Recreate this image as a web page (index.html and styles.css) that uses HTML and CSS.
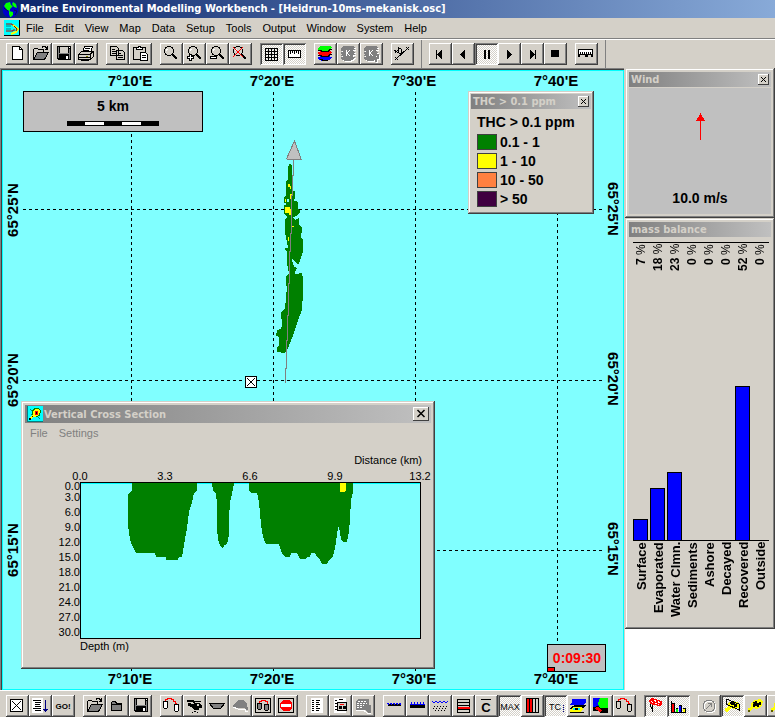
FILE: index.html
```html
<!DOCTYPE html>
<html lang="en">
<head>
<meta charset="utf-8">
<title>Marine Environmental Modelling Workbench</title>
<link rel="stylesheet" href="styles.css">
</head>
<body>
<svg class="defs" aria-hidden="true">
  <defs>
    <symbol id="open" viewBox="0 0 23 22">
      <path d="M4.500 15.500v-9l1-1h3l1 1h5v3" fill="#d4d0c8" stroke="#000"/>
      <path d="M4.500 16.500l4-7h11l-4 7z" fill="#808080" stroke="#000"/>
      <path d="M12.500 4.500h1v-1h3v1h1v1h1M18.500 3v4M16 6.500h3" fill="none" stroke="#000"/>
    </symbol>
    <symbol id="save" viewBox="0 0 23 22">
      <path d="M5 3h14v14H6l-1-1z"/>
      <path d="M6 4h1v11H6zM17 6h1v10h-1zM7 10h10v1H7z" fill="#808080"/>
      <path d="M8 4h8v6H8z" fill="#d4d0c8"/><path d="M17 4h1v1h-1zM14 13h2v3h-2z" fill="#fff"/>
    </symbol>
    <symbol id="lens" viewBox="0 0 23 22">
      <circle cx="9" cy="8" r="4.500" fill="#d4d0c8" stroke="#000"/>
      <path d="M6.500 8V6.500H8" fill="none" stroke="#fff"/>
      <path d="M12 11l5 5" stroke="#000" stroke-width="2"/>
    </symbol>
    <symbol id="booms" viewBox="0 0 23 22">
      <path d="M3.500 6.500h4v6l-1 1h-2l-1-1zM14.500 9.500h4v6l-1 1h-2l-1-1z" stroke="#000"/>
      <path d="M5.500 6V4.500h2v-1h4v1h2v2h2v2h1V9" fill="none" stroke="#f00"/>
    </symbol>
    <symbol id="stack" viewBox="0 0 23 22">
      <path d="M3 15l4-2h7l4 1-3 3-4 1H8z" class="s3"/><path d="M3 10l4-2h8l3 1-4 4H7z" class="s2"/><path d="M3 6l4-3h8l3 1-4 4H7z" class="s1"/>
      <path d="M4 7.500h3l1 1h6l2-2h2M4 12.500h3l1 1h6l2-2h2M6 16.500h2l1 1h5" fill="none" class="s4"/>
    </symbol>
    <symbol id="spill" viewBox="0 0 23 22">
      <path d="M4 16v-3l3-1V8l4-3 6-1 2 3-2 5-4 2-4-1-3 4z" fill="#ff0"/>
      <path d="M9 7h2V6h2v2h2V7h2v3h-2v2h-2v-1h-2v1H9z"/><path d="M4 15h2v2H4zM9 8h1v1H9z" fill="#606000"/>
    </symbol>
    <symbol id="close" viewBox="0 0 11 11"><path d="M3 3l5 5M8 3l-5 5" stroke="#000" stroke-width="1"/></symbol>
  </defs>
</svg>

<header class="titlebar">
  <svg class="globe" viewBox="0 0 17 17" aria-hidden="true"><circle cx="8.500" cy="8.500" r="8" fill="#00c"/><path d="M4 2l4-1 1 3 2 1-3 3v2l-3-1-3-4zM11 1l3 2 1 4-3-1-2-3zM7 10l4 1v3l-2 2H8l-1-3z" fill="#0f0"/><path d="M2 7l4 3M12 9l3 1-2 4" stroke="#0a0a50" fill="none"/></svg>
  <h1>Marine Environmental Modelling Workbench - [Heidrun-10ms-mekanisk.osc]</h1>
</header>

<nav class="menubar" aria-label="Main menu">
  <svg class="docicon" viewBox="0 0 16 16" aria-hidden="true"><path d="M0 0h16v16H0z" fill="#0ff"/><path d="M2 4h6v1h2M2 11h7v-1h2" stroke="#b00000" fill="none"/><path d="M2 6h5M2 9h5" stroke="#008080"/><path d="M9 5l5 4-2 3-5 2" stroke="#ff0" stroke-width="2" fill="none"/><path d="M10 6l3 3-1 2" stroke="#800000" fill="none"/><path d="M0 15.500h15.500V0" stroke="#000" fill="none"/></svg>
  <button>File</button><button>Edit</button><button>View</button><button>Map</button><button>Data</button><button>Setup</button><button>Tools</button><button>Output</button><button>Window</button><button>System</button><button>Help</button>
</nav>

<div class="toolbar top" role="toolbar" aria-label="Standard">
  <div class="group">
    <button class="tool" aria-label="New"><svg viewBox="0 0 23 22"><path d="M6.500 3.500h7l3 3v10h-10z" fill="#fff" stroke="#000"/><path d="M13.500 3.500v3h3" fill="none" stroke="#000"/></svg></button>
    <button class="tool" aria-label="Open"><svg><use href="#open"/></svg></button>
    <button class="tool" aria-label="Save"><svg><use href="#save"/></svg></button>
    <button class="tool" aria-label="Print"><svg viewBox="0 0 23 22"><path d="M7.500 9.500l2-6h8l-2 6z" fill="#fff" stroke="#000"/><path d="M10 5.500h5M9 7.500h5" stroke="#000"/><path d="M3.500 11.500l3-3h12v5l-3 3h-12z" fill="#d4d0c8" stroke="#000"/><path d="M3 11.500h12l3-3M15.500 11v5M4 14.500h11M6 17.500h8" fill="none" stroke="#000"/><path d="M11 13h2" stroke="#808000"/></svg></button>
  </div>
  <div class="group">
    <button class="tool" aria-label="Copy"><svg viewBox="0 0 23 22"><path d="M4.500 3.500h6l2 2v7h-8zM10.500 7.500h6l2 2v7h-8z" fill="#d4d0c8" stroke="#000"/><path d="M6 6.500h3M6 8.500h4M6 10.500h4M12 10.500h3M12 12.500h5M12 14.500h5" stroke="#000"/></svg></button>
    <button class="tool" aria-label="Paste"><svg viewBox="0 0 23 22"><path d="M4.500 4.500h12v12h-12z" fill="#d4d0c8" stroke="#000"/><path d="M7.500 6.500v-2h2v-1h2v1h2v2z" fill="#fff" stroke="#000"/><path d="M11.500 9.500h5l2 2v6h-7z" fill="#fff" stroke="#000"/><path d="M13 12.500h4M13 14.500h4" stroke="#000"/></svg></button>
  </div>
  <div class="group">
    <button class="tool" aria-label="Zoom"><svg><use href="#lens"/></svg></button>
    <button class="tool" aria-label="Zoom in"><svg viewBox="0 0 23 22"><use href="#lens" x="1"/><path d="M6.500 11.500h2v2h2v2h-2v2h-2v-2h-2v-2h2z" fill="#fff" stroke="#000"/></svg></button>
    <button class="tool" aria-label="Zoom out"><svg viewBox="0 0 23 22"><use href="#lens" x="1"/><path d="M4.500 13.500h6v2h-6z" fill="#fff" stroke="#000"/></svg></button>
    <button class="tool" aria-label="Reset zoom"><svg viewBox="0 0 23 22"><use href="#lens"/><path d="M4 4l10 10M14 4L4 14" stroke="#f00"/></svg></button>
  </div>
  <div class="group">
    <button class="tool pressed" aria-label="Grid"><svg viewBox="0 0 23 22"><path d="M5.500 5v13M8.500 5v13M11.500 5v13M14.500 5v13M17.500 5v13M5 5.500h13M5 8.500h13M5 11.500h13M5 14.500h13M5 17.500h13" stroke="#000"/></svg></button>
    <button class="tool pressed" aria-label="Scale"><svg viewBox="0 0 23 22"><path d="M5.500 7.500h12v7h-12z" fill="#fff" stroke="#000"/><path d="M7.500 8v3M9.500 8v2M11.500 8v3M13.500 8v2M15.500 8v3" stroke="#000"/></svg></button>
  </div>
  <div class="group">
    <button class="tool layers" aria-label="Layers"><svg><use href="#stack"/></svg></button>
    <button class="tool layers off" aria-label="Layer K" disabled><svg viewBox="0 0 23 22"><use href="#stack"/><path d="M9.500 7v6M13 7l-3 3 3 3" stroke="#fff" fill="none"/></svg></button>
    <button class="tool layers off" aria-label="Layer query" disabled><svg viewBox="0 0 23 22"><use href="#stack"/><path d="M9.500 7v6M13 7l-3 3 3 3" stroke="#fff" fill="none"/><path d="M14 13v-1h4v3h-2v4" stroke="#808080" stroke-width="2" fill="none"/></svg></button>
  </div>
  <div class="group">
    <button class="tool" aria-label="Section"><svg viewBox="0 0 23 22"><path d="M5 16l12-11M3.500 7.500l7 4M7.500 4v6M7.500 4.500l3 2v4" stroke="#000" fill="none"/><path d="M4 14l3 3M7 14l-3 3M15 4l3 3M18 4l-3 3M4 10l5-5" stroke="#000"/></svg></button>
  </div>
  <div class="rule"></div>
  <div class="group">
    <button class="tool" aria-label="First"><svg viewBox="0 0 23 22"><path d="M7 7h1v9H7zM8 11.500l5-4.500v9z"/></svg></button>
    <button class="tool" aria-label="Step back"><svg viewBox="0 0 23 22"><path d="M8 11.500l5-4.500v9z"/></svg></button>
    <button class="tool pressed" aria-label="Pause"><svg viewBox="0 0 23 22"><path d="M9 7h2v9H9zM13 7h2v9h-2z"/></svg></button>
    <button class="tool" aria-label="Play"><svg viewBox="0 0 23 22"><path d="M9 7l5 4.500-5 4.500z"/></svg></button>
    <button class="tool" aria-label="Last"><svg viewBox="0 0 23 22"><path d="M9 7l5 4.500-5 4.500zM14 7h1v9h-1z"/></svg></button>
    <button class="tool" aria-label="Stop"><svg viewBox="0 0 23 22"><path d="M7 7h8v7H7z"/></svg></button>
  </div>
  <div class="group">
    <button class="tool" aria-label="Timeline"><svg viewBox="0 0 23 22"><path d="M3.500 6.500h14v5h-14z" fill="#fff" stroke="#000"/><path d="M5.500 9v2M7.500 9v2M9.500 9v2M11.500 9v2M13.500 9v2M15.500 9v2" stroke="#000"/><path d="M3 11h2v3H3zM16 11h2v3h-2zM10 11h1v-1h1v1h1v3h-3z"/></svg></button>
  </div>
  <div class="rule"></div>
</div>

<main class="workspace">
  <section class="map" aria-label="Map">
    <svg class="chart" width="100%" height="100%">
      <g transform="translate(-3 -71)">
        <g class="grid">
          <path d="M131.500 92V672M273.500 92V672M415.500 92V672M557.500 92V672M23 209.500H604M23 380.500H604M23 550.500H604"/>
        </g>
        <g class="coord">
          <text x="130" y="86">7°10'E</text><text x="272" y="86">7°20'E</text><text x="414" y="86">7°30'E</text><text x="556" y="86">7°40'E</text>
          <text x="130" y="684">7°10'E</text><text x="272" y="684">7°20'E</text><text x="414" y="684">7°30'E</text><text x="556" y="684">7°40'E</text>
          <text transform="translate(18 210) rotate(-90)">65°25'N</text><text transform="translate(18 380) rotate(-90)">65°20'N</text><text transform="translate(18 550) rotate(-90)">65°15'N</text>
          <text transform="translate(608 209) rotate(90)">65°25'N</text><text transform="translate(608 379) rotate(90)">65°20'N</text><text transform="translate(608 549) rotate(90)">65°15'N</text>
        </g>
        <g class="crisp">
          <path d="M23.500 91.500h179v40h-179z" fill="#c0c0c0" stroke="#000"/>
          <path d="M67 121h92v5H67z"/><path d="M85 122h19v3H85zM122 122h19v3h-19z" fill="#fff"/>
          <path fill="#008000" d="M290 163L292 166V180L293 191H295V198L294 201H297L298 203V209L300 210V213L297 215V216L293 217L295 220L299 218L299 224L302 228L301 238L303 240V252L301 257L299 264H297L292 258V261L293 263L294 267L297 268L295 272V274L302 273L303 278V293L302 310L298 320L295 330L292 338L288 348L285 353L277 352V348L279 345V337L276 336L277 330L281 329L282 325L281 312L285 309L286 298L287 287L286 285V277L289 273L287 263V252L285 249V248H288L286 237L285 233V220L287 217L284 213V197L286 195V182L288 179V167Z"/>
          <path fill="#ff0" d="M288 184h2v2h1v3h-1v-2h-2zM290 194h2v5h-2zM285 199h1v3h-1zM285 207h5v2h2v6h-3v-2h-4zM288 237h1v4h-1zM292 226h2v1h-2z"/>
          <path fill="#80ffff" d="M287 199h2v3h-2zM284 203h2v2h-2z"/>
          <path d="M293.500 160v15h-1v20h-1v38h-1v18h-1v32h-1v32h-1v25h-1v28h-1v15" fill="none" stroke="#808080"/>
          <path d="M294.500 141l7 19-15-1z" fill="#c0c0c0" stroke="#808080"/>
          <path d="M245.500 376.500h11v11h-11z" fill="#fff" stroke="#000"/><path d="M247 378l8 8M255 378l-8 8" stroke="#000"/>
          <path d="M547.500 644.500h58v27h-58z" fill="#c0c0c0" stroke="#000"/>
          <path d="M547.500 667.500h7v4h-7z" fill="#f00" stroke="#000"/>
        </g>
        <text class="big" x="113" y="111">5 km</text>
        <text class="big clock" x="577" y="663">0:09:30</text>
      </g>
    </svg>

    <section class="window legend" aria-label="Legend">
      <header class="caption"><h2>THC &gt; 0.1 ppm</h2><button class="x" aria-label="Close"><svg><use href="#close"/></svg></button></header>
      <div class="legend-body">
        <p>THC &gt; 0.1 ppm</p>
        <ul>
          <li><i class="green"></i>0.1 - 1</li>
          <li><i class="yellow"></i>1 - 10</li>
          <li><i class="orange"></i>10 - 50</li>
          <li><i class="purple"></i>&gt; 50</li>
        </ul>
      </div>
    </section>

    <section class="window cross" aria-label="Vertical Cross Section">
      <header class="caption tall">
        <svg class="wicon" viewBox="0 0 16 16"><path d="M0 0h16v16H0z" fill="#0ff"/><path d="M3 3l10 10M4 8h9" stroke="#008080" fill="none"/><path d="M5 9V5l3-3h4l2 3-1 4-3 2H7l-4 3-1-2z" fill="#ff0"/><path d="M5.500 9V5l3-3h3l2 3-1 4-3 2" stroke="#008000" fill="none"/><path d="M8 5h3v4H8z" fill="#f00"/><path d="M2 12h2v2H2zM5 10h1v1H5zM9 6h1v2H9z"/><path d="M.5 0v15.500H16" stroke="#008080" fill="none"/></svg>
        <h2>Vertical Cross Section</h2>
        <button class="x big-x" aria-label="Close"><svg viewBox="0 0 16 14"><path d="M4.500 3l7 7M11.500 3l-7 7" stroke="#000" stroke-width="1.500"/></svg></button>
      </header>
      <nav class="submenu"><button disabled>File</button><button disabled>Settings</button></nav>
      <svg class="profile" viewBox="25 443 406 222">
        <text x="422" y="464" class="end">Distance (km)</text>
        <g class="mid"><text x="80" y="480">0.0</text><text x="165" y="480">3.3</text><text x="250" y="480">6.6</text><text x="335" y="480">9.9</text><text x="420" y="480">13.2</text></g>
        <g class="end"><text x="80" y="490">0.0</text><text x="80" y="501">3.0</text><text x="80" y="516">6.0</text><text x="80" y="531">9.0</text><text x="80" y="546">12.0</text><text x="80" y="561">15.0</text><text x="80" y="576">18.0</text><text x="80" y="591">21.0</text><text x="80" y="606">24.0</text><text x="80" y="621">27.0</text><text x="80" y="636">30.0</text></g>
        <g class="crisp">
          <path d="M80.500 482.500h340v156h-340z" fill="#80ffff" stroke="#000"/>
          <path d="M81 483h339v1H81z" fill="#0ff"/>
          <path fill="#008000" d="M132 483v8l-4 3v31l2 15 3 7 3 6h19l1 4h10v3h12l1-3h3l2-12 3-17 2-16 3-10 2-9 3-3v-7zM212 483l1 7 3 4 1 10v24l1 12 3 7 2 2 1-4 3-1 2-9v-17l1-16 2-8 2-11zM249 483v8l2 2h6l2 9 2 23 2 12 3 7h13l3 9 3 4h5l1-4h6l3 6h6l1-2h3l1-4h4l2 4 3 3 2 4h5l2-4 4-4 2-8 2-13 1-8h1l1 5 1 8 2 2h4l2-10 1-14 1-18 2-8v-9z"/>
          <path d="M340 483h6v8l-2 1h-4z" fill="#ff0"/>
        </g>
        <text x="80" y="650">Depth (m)</text>
      </svg>
    </section>
  </section>

  <aside class="side">
    <section class="window wind" aria-label="Wind">
      <header class="caption"><h2>Wind</h2><button class="x" aria-label="Close"><svg><use href="#close"/></svg></button></header>
      <div class="wind-body">
        <svg viewBox="0 0 11 27"><path d="M5 7h1v20H5z" fill="#f00"/><path d="M5.500 0L10 8H1z" fill="#f00"/></svg>
        <strong>10.0 m/s</strong>
      </div>
    </section>
    <section class="window mass" aria-label="mass balance">
      <header class="caption"><h2>mass balance</h2></header>
      <ul class="bars">
        <li><b>7 <span>%</span></b><div><i style="--v:7"></i></div><em>Surface</em></li>
        <li><b>18 <span>%</span></b><div><i style="--v:17.300"></i></div><em>Evaporated</em></li>
        <li><b>23 <span>%</span></b><div><i style="--v:22.700"></i></div><em>Water Clmn.</em></li>
        <li><b>0 <span>%</span></b><div></div><em>Sediments</em></li>
        <li><b>0 <span>%</span></b><div></div><em>Ashore</em></li>
        <li><b>0 <span>%</span></b><div></div><em>Decayed</em></li>
        <li><b>52 <span>%</span></b><div><i style="--v:51.300"></i></div><em>Recovered</em></li>
        <li><b>0 <span>%</span></b><div></div><em>Outside</em></li>
      </ul>
    </section>
  </aside>
</main>

<div class="toolbar bottom" role="toolbar" aria-label="Tools">
  <div class="group">
    <button class="tool" aria-label="Site"><svg viewBox="0 0 23 22"><path d="M4.500 4.500h12v12h-12z" fill="#fff" stroke="#000"/><path d="M6 6l9 9M15 6l-9 9" stroke="#000"/></svg></button>
    <button class="tool" aria-label="Sort"><svg viewBox="0 0 23 22"><path d="M3 3h11v15H3z" fill="#fff"/><path d="M4 5.500h8M6 7.500h6M6 9.500h5M6 11.500h6M4 13.500h8M6 15.500h6" stroke="#000"/><path d="M16 5h1v9h2v1h-1v1h-1v1h-1v-1h-1v-1h-1v-1h2z" fill="#000080"/></svg></button>
    <button class="tool" aria-label="Go"><svg viewBox="0 0 23 22"><text x="11" y="14" class="go">GO!</text></svg></button>
  </div>
  <div class="group">
    <button class="tool" aria-label="Open"><svg><use href="#open"/></svg></button>
    <button class="tool" aria-label="Folder"><svg viewBox="0 0 23 22"><path d="M5.500 15.500v-8l1-1h3l1 2h5v7z" fill="#808080" stroke="#000"/><path d="M6 9.500h9" stroke="#000"/></svg></button>
    <button class="tool" aria-label="Save"><svg><use href="#save"/></svg></button>
  </div>
  <div class="group">
    <button class="tool white" aria-label="Booms"><svg><use href="#booms"/></svg></button>
    <button class="tool" aria-label="Helicopter"><svg viewBox="0 0 23 22"><path d="M4 5h7v1h7v1H4zM10 6h2v2h4l3 2v3h-3v2h-5l-2-3-4-1V8h2l1 1h3zM11 16h2v1h-2zM9 17h1v1H9zM14 17h1v1h-1z"/><path d="M14 9h2v2h-2z" fill="#d4d0c8"/></svg></button>
    <button class="tool" aria-label="Vessel"><svg viewBox="0 0 23 22"><path d="M3.500 8.500h15l-4 5h-7z" fill="#808080" stroke="#000"/></svg></button>
    <button class="tool" aria-label="Slick"><svg viewBox="0 0 23 22"><path d="M3 11l4-3 2-3h5l4 4 1 6h-3v-2H7z" fill="#808080"/><path d="M4 12l5 2h7v2h3" stroke="#fff" fill="none"/></svg></button>
    <button class="tool" aria-label="Boom response"><svg viewBox="0 0 23 22"><path d="M3.500 3.500h15v14h-15z" fill="none" stroke="#000"/><path d="M5.500 8.500h4v5l-1 1h-2l-1-1zM12.500 9.500h4v5l-1 1h-2l-1-1z" fill="#808080" stroke="#000"/><path d="M7.500 8V6.500h2v-1h4v1h2V9" fill="none" stroke="#f00"/></svg></button>
    <button class="tool" aria-label="Stop response"><svg viewBox="0 0 23 22"><path d="M3.500 3.500h15v14h-15z" fill="none" stroke="#000"/><path d="M8 5h6l3 3v5l-3 3H8l-3-3V8z" fill="#f00"/><path d="M6 9h10v3H6z" fill="#fff"/></svg></button>
  </div>
  <div class="group">
    <button class="tool" aria-label="Report"><svg viewBox="0 0 23 22"><path d="M5 3h12v15H5z" fill="#fff"/><path d="M6 5.500h2M6 7.500h2M6 9.500h2M6 11.500h2M6 13.500h2M6 15.500h2M10 5.500h4M10 7.500h3M10 9.500h4M10 11.500h2M10 13.500h4M10 15.500h3" stroke="#000"/></svg></button>
    <button class="tool" aria-label="Response report"><svg viewBox="0 0 23 22"><path d="M5 3h12v15H5z" fill="#fff"/><path d="M6 5.500h2M6 8.500h2M6 11.500h2M6 14.500h2M10 4.500h4" stroke="#000"/><path d="M8.500 7.500h9v8h-9z" fill="#d4d0c8" stroke="#000"/><path d="M10 11h3v3h-3zM14 11h3v3h-3z"/><path d="M11 9.500h4" stroke="#f00"/></svg></button>
    <button class="tool" aria-label="Calculate" disabled><svg viewBox="0 0 23 22"><path d="M4 14V6l2-2h11v6h2v8h-3l-3-3H4z" fill="#808080"/><path d="M6 6.500h9M5 8.500h10M5 10.500h7M5 12.500h6" stroke="#fff" stroke-dasharray="2 1"/><path d="M4 15.500h8l4 3h3" stroke="#fff" fill="none"/></svg></button>
  </div>
  <div class="group">
    <button class="tool" aria-label="Surface"><svg viewBox="0 0 23 22"><path d="M4 8.500h15" stroke="#00f" stroke-dasharray="2 1"/><path d="M5 9h13v2H5z"/><path d="M5 9.500h13" stroke="#00f" stroke-dasharray="1 2"/></svg></button>
    <button class="tool" aria-label="Waves"><svg viewBox="0 0 23 22"><path d="M4 10h15v3H4z"/><path d="M5 10V7M8 10V7M11 10V7M14 10V7M17 10V7" stroke="#00f"/><path d="M4 9.500h15" stroke="#00f"/></svg></button>
    <button class="tool" aria-label="Dissolved"><svg viewBox="0 0 23 22"><path d="M3 6l2 2 2-2 2 2 2-2 2 2 2-2 2 2 2-2" stroke="#00f" fill="none"/><path d="M5 11.500h13M4 13.500h13M6 15.500h11" stroke="#000" stroke-dasharray="1 2"/></svg></button>
    <button class="tool" aria-label="Depth layers"><svg viewBox="0 0 23 22"><path d="M5 4.500h13M5 7.500h13M5 10.500h13M5 14.500h13M5 17.500h13M5.500 4v14M17.500 4v14" stroke="#000"/><path d="M6 12h12v2H6z" fill="#f00"/></svg></button>
    <button class="tool" aria-label="Mean concentration"><svg viewBox="0 0 23 22"><path d="M6 4.500h10" stroke="#000"/><text x="11" y="17" class="c">C</text></svg></button>
    <button class="tool pressed" aria-label="Maximum"><svg viewBox="0 0 23 22"><text x="12" y="15" class="label">MAX</text></svg></button>
    <button class="tool" aria-label="Columns"><svg viewBox="0 0 23 22"><path d="M5.500 3v15M8.500 3v15M11.500 3v15M14.500 3v15M17.500 3v15M5 3.500h13M5 17.500h13" stroke="#000"/><path d="M6 4h2v13H6zM9 4h2v13H9z" fill="#f00"/></svg></button>
    <button class="tool pressed" aria-label="Total concentration"><svg viewBox="0 0 23 22"><text x="11" y="15" class="label">TC</text><path d="M19.500 10v7" stroke="#008" stroke-dasharray="1 1"/></svg></button>
    <button class="tool" aria-label="Concentration profile"><svg viewBox="0 0 23 22"><path d="M5 4h14v4l-3 2H3l2-3z" fill="#00f"/><path d="M3 13l5-3h11l-4 4H3z"/><path d="M3 15l3-3h8l2 2-3 3H3z" fill="#ff0"/><path d="M6 13h7v2H6z" fill="#0ff"/><path d="M8 13h3v2H8zM3 17h14v1H3z"/></svg></button>
    <button class="tool" aria-label="Field"><svg viewBox="0 0 23 22"><path d="M3 3h15v15H3z" fill="#00f"/><path d="M10 3h8v10h-8l-2-4z" fill="#0f0"/><path d="M3 12l5-1 3 2h7v5h-8l-2-2H3z"/><path d="M4 13l4-1 4 3-2 2-3-2z" fill="#f00"/><path d="M3 16h5l3 2H3z" fill="#d4d0c8"/></svg></button>
    <button class="tool clear" aria-label="Booms outline"><svg><use href="#booms"/></svg></button>
  </div>
  <div class="group">
    <button class="tool pressed" aria-label="Wind sock"><svg viewBox="0 0 23 22"><path d="M5 5l3-2 10 3v4l-3 1-9-2z" fill="#f00"/><path d="M7 6.500l8 3M10 5.500l6 2" stroke="#fff" stroke-dasharray="2 2"/><path d="M6 9l3 8M8 10l1 7" stroke="#000"/></svg></button>
    <button class="tool pressed" aria-label="Mass balance"><svg viewBox="0 0 23 22"><path d="M4 6h1v12H4zM5 8h3v10H5zM9 13h2v4H9zM12 10h3v8h-3zM16 13h3v5h-3zM4 17h15v1H4z"/><path d="M5 9h2v8H5z" fill="#f00"/><path d="M9 14h2v3H9z" fill="#0f0"/><path d="M12 11h2v6h-2z" fill="#00f"/><path d="M16 14h2v3h-2z" fill="#ff0"/></svg></button>
  </div>
  <div class="group">
    <button class="tool" aria-label="Compass" disabled><svg viewBox="0 0 23 22"><circle cx="12" cy="12" r="6" fill="none" stroke="#fff"/><circle cx="11" cy="11" r="6" fill="none" stroke="#808080"/><path d="M8 14l5-5M10 8.500h3.500V12" stroke="#808080" fill="none"/></svg></button>
    <button class="tool pressed" aria-label="Section line"><svg viewBox="0 0 23 22"><path d="M4 16v-3l3-1V8l5-2 6 2v5l-4 1-4-1-4 4z" fill="#ff0"/><path d="M5 4l13 5v6L5 9z" fill="none" stroke="#000"/><path d="M9 7h5v2h2v3h-3v-2h-3z"/></svg></button>
    <button class="tool" aria-label="Spill"><svg><use href="#spill"/></svg></button>
    <button class="tool" aria-label="Spill track"><svg><use href="#spill"/></svg></button>
  </div>
</div>
</body>
</html>
```
FILE: styles.css
```css
* { box-sizing: border-box; }

body {
  margin: 0;
  height: 100vh;
  display: flex;
  flex-direction: column;
  overflow: hidden;
  background: #d4d0c8;
  color: #000;
  font: 11px/14px "Liberation Sans", Arial, sans-serif;
}

h1, h2, p, ul { margin: 0; padding: 0; }
ul { list-style: none; }
button { font: inherit; color: inherit; padding: 0; border: 0; background: none; }
.defs { position: absolute; width: 0; height: 0; }

.titlebar {
  flex: none;
  display: flex;
  align-items: center;
  gap: 1px;
  height: 18px;
  padding-left: 2px;
  background: linear-gradient(90deg, #0a246a, #88aad8);
  color: #fff;
}
.titlebar h1 { font: bold 11px/18px "DejaVu Sans Condensed", "DejaVu Sans", sans-serif; white-space: nowrap; }
.globe { width: 17px; height: 17px; }

.menubar {
  flex: none;
  display: flex;
  align-items: center;
  height: 21px;
  padding-left: 4px;
  border-bottom: 1px solid #808080;
}
.docicon { width: 16px; height: 16px; }
.menubar button { padding: 0 5px 0 6px; }

.toolbar { flex: none; display: flex; gap: 8px; padding-left: 6px; border-top: 1px solid #fff; }
.toolbar.top { height: 29px; padding-top: 3px; }
.toolbar.bottom { height: 27px; padding-top: 4px; }
.group { flex: none; display: flex; }
.rule { flex: none; width: 1px; height: 29px; margin: -3px -1px 0 -1px; background: #808080; }

.tool {
  width: 23px;
  height: 22px;
  box-shadow: inset -1px -1px #404040, inset 1px 1px #fff, inset -2px -2px #808080;
}
.tool svg { display: block; width: 23px; height: 22px; shape-rendering: crispEdges; }
.tool.pressed {
  background: repeating-conic-gradient(#fff 0 25%, #d4d0c8 0 50%) 0 0 / 2px 2px;
  box-shadow: inset 1px 1px #808080, inset -1px -1px #fff, inset 2px 2px #404040;
}
.white { fill: #fff; }
.clear { fill: none; }
.layers { --a: #0f0; --b: #f00; --c: #00f; --d: #000; }
.layers.off { --a: #808080; --b: #808080; --c: #808080; --d: #808080; }
.layers.off svg { filter: drop-shadow(1px 1px 0 #fff); }
.s1 { fill: var(--a); }
.s2 { fill: var(--b); }
.s3 { fill: var(--c); }
.s4 { stroke: var(--d); }
.go { font-size: 8px; font-weight: bold; text-anchor: middle; }
.label { font-size: 9px; text-anchor: middle; }
.c { font-size: 13px; font-weight: bold; text-anchor: middle; }

.workspace { flex: 1; display: flex; min-height: 0; background: #fff; }

.map {
  flex: 1;
  min-width: 0;
  position: relative;
  overflow: hidden;
  padding: 3px 2px 1px 3px;
  background: #80ffff;
  border-right: 1px solid #d4d0c8;
  box-shadow: inset 1px 1px #808080, inset 2px 2px #404040, inset 3px 3px #0ff, inset -1px -1px #0ff;
}
.chart { display: block; }
.crisp, .grid { shape-rendering: crispEdges; }
.grid path { fill: none; stroke: #000; stroke-dasharray: 3 3; }
.coord { font-size: 15px; font-weight: bold; text-anchor: middle; }
.big { font-size: 14px; font-weight: bold; text-anchor: middle; }
.clock { fill: #f00; }

.window {
  display: flex;
  flex-direction: column;
  padding: 4px;
  background: #d4d0c8;
  box-shadow: inset -1px -1px #404040, inset 1px 1px #d4d0c8, inset -2px -2px #808080, inset 2px 2px #fff;
}
.caption {
  flex: none;
  display: flex;
  align-items: center;
  height: 15px;
  padding: 0 2px;
  background: linear-gradient(90deg, #808080, #c0c0c0);
  color: #d4d0c8;
}
.caption h2 { flex: 1; font: bold 11px/15px "DejaVu Sans Condensed", "DejaVu Sans", sans-serif; white-space: nowrap; }
.caption.tall { height: 18px; }
.wicon { width: 16px; height: 16px; margin-right: 1px; shape-rendering: crispEdges; }
.x {
  width: 11px;
  height: 11px;
  background: #d4d0c8;
  box-shadow: inset -1px -1px #404040, inset 1px 1px #fff;
}
.x svg { display: block; width: 11px; height: 11px; }
.big-x, .big-x svg { width: 16px; height: 14px; }

.legend { position: absolute; left: 468px; top: 23px; width: 126px; padding: 3px; }
.legend-body { padding: 3px 6px 3px; font-size: 14px; font-weight: bold; }
.legend-body p { line-height: 20px; white-space: nowrap; }
.legend-body li { display: flex; align-items: center; gap: 3px; height: 19px; }
.legend-body i { width: 20px; height: 16px; border: 1px solid #404040; }
.green { background: #008000; }
.yellow { background: #ff0; }
.orange { background: #ff8040; }
.purple { background: #400040; }

.cross { position: absolute; left: 21px; top: 333px; width: 414px; }
.submenu { display: flex; gap: 11px; height: 20px; padding-left: 5px; color: #808080; }
.profile { display: block; width: 100%; font-size: 11px; }
.mid { text-anchor: middle; }
.end { text-anchor: end; }

.side { flex: none; width: 150px; }
.wind { height: 150px; }
.wind-body {
  flex: 1;
  display: flex;
  flex-direction: column;
  align-items: center;
  justify-content: space-between;
  margin-top: 1px;
  padding: 25px 0 9px;
  background: #c0c0c0;
  font-size: 14px;
}
.wind-body svg { width: 11px; height: 27px; shape-rendering: crispEdges; }

.bars { display: grid; grid-template-columns: repeat(8, 17px); margin: 5px 4px 0; }
.bars li { display: flex; flex-direction: column; align-items: center; }
.bars b, .bars em { writing-mode: vertical-rl; transform: rotate(180deg); font-style: normal; white-space: nowrap; line-height: 17px; }
.bars b { height: 31px; font-size: 12px; text-align: right; border-bottom: 1px solid #000; padding-bottom: 1px; }
.bars b span { font-weight: normal; }
.bars div { width: 17px; height: 268px; display: flex; align-items: flex-end; border-bottom: 1px solid #000; }
.bars i { width: 15px; height: calc(var(--v) * 3px); background: #00f; border: 1px solid #000; border-bottom: 0; }
.bars em { height: 84px; font-size: 13px; font-weight: bold; text-align: right; padding-bottom: 1px; }
```
